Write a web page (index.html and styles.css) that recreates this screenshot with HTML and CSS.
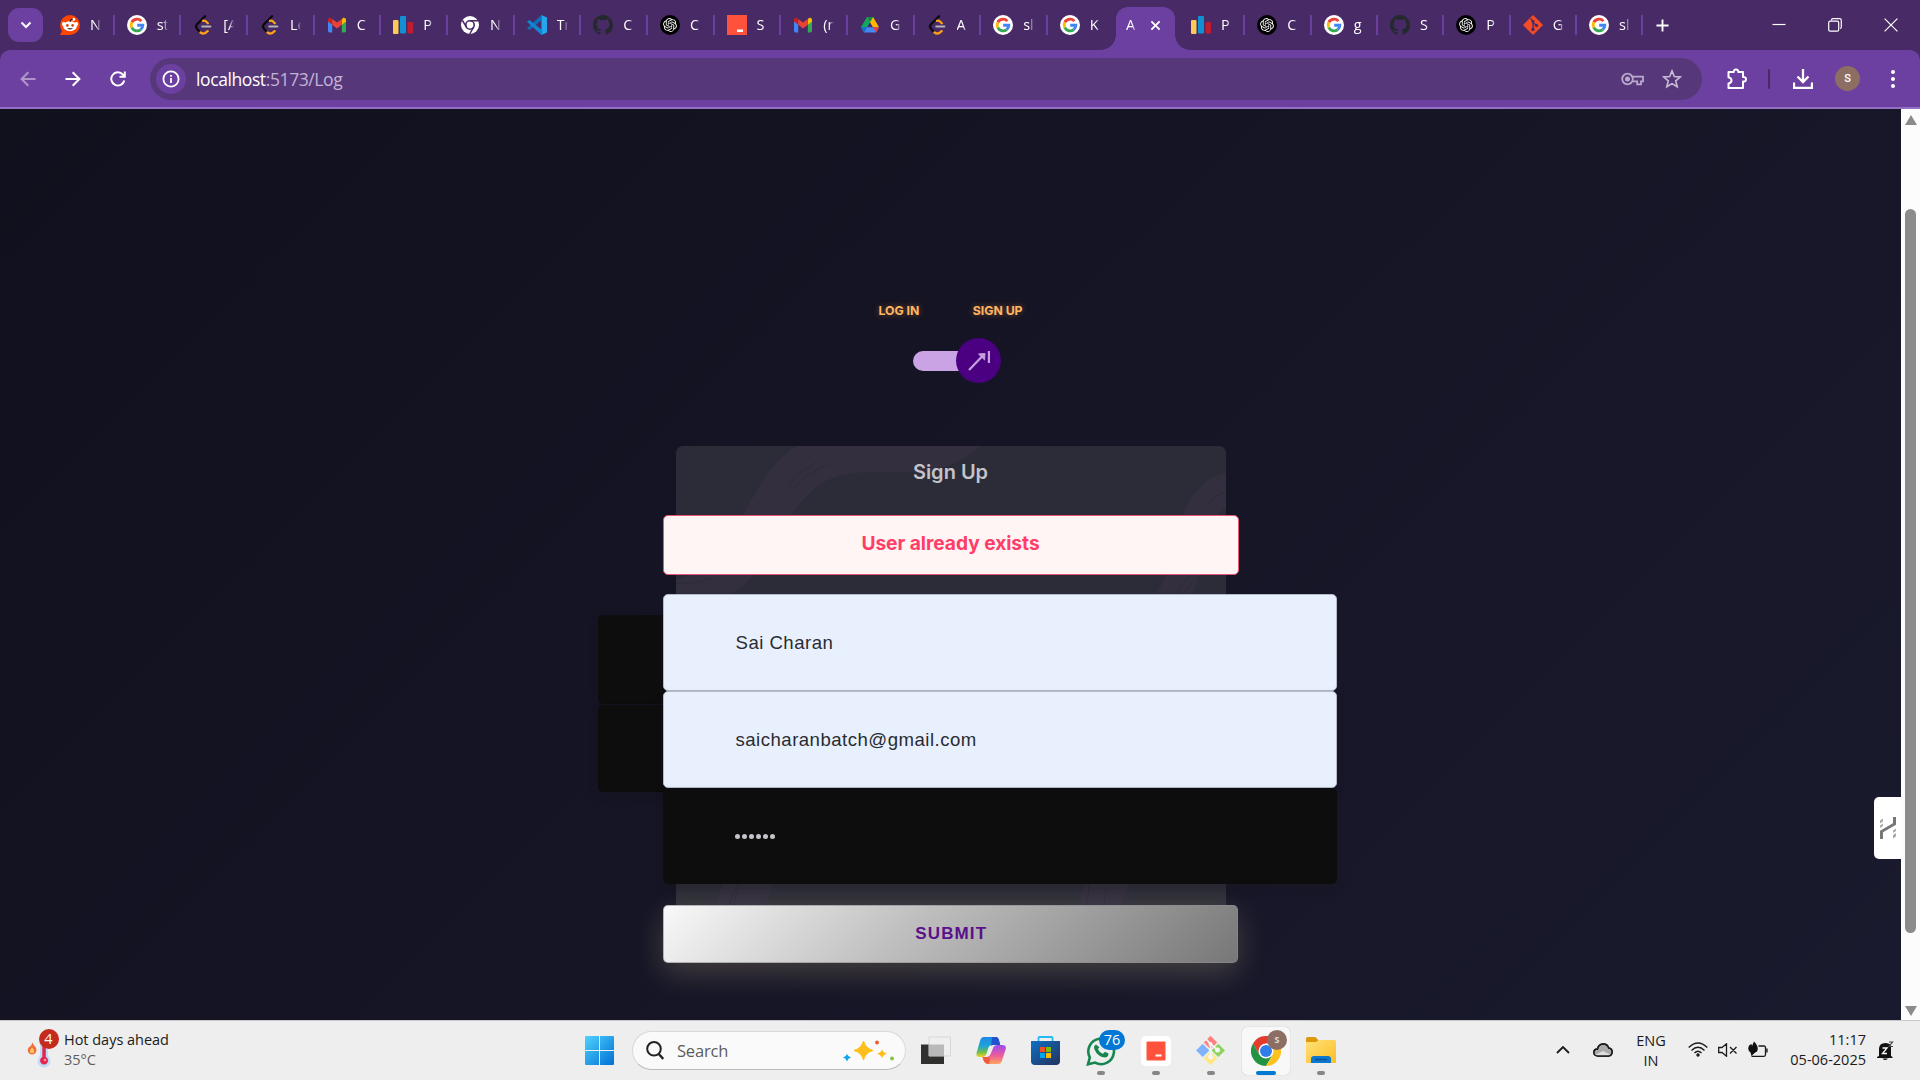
FILE: index.html
```html
<!DOCTYPE html>
<html lang="en">
<head>
<meta charset="utf-8">
<title>Log</title>
<link rel="stylesheet" href="styles.css">
</head>
<body>
<svg class="defs" aria-hidden="true">
  <defs>
    <linearGradient id="win" x1="0" y1="0" x2="1" y2="1"><stop offset="0" stop-color="#4fd2ff"/><stop offset="1" stop-color="#0070d3"/></linearGradient>
    <linearGradient id="copA" x1="0" y1="0" x2="0" y2="1"><stop offset="0" stop-color="#1e88e8"/><stop offset=".45" stop-color="#1fa3d8"/><stop offset=".75" stop-color="#6cbf4b"/><stop offset="1" stop-color="#f4d21f"/></linearGradient>
    <linearGradient id="copB" x1="0" y1="0" x2="0" y2="1"><stop offset="0" stop-color="#9a4df0"/><stop offset=".55" stop-color="#ec5c9c"/><stop offset="1" stop-color="#ffa65c"/></linearGradient>
    <linearGradient id="store" x1="0" y1="0" x2="1" y2="1"><stop offset="0" stop-color="#0d6fc4"/><stop offset="1" stop-color="#25335c"/></linearGradient>
    <linearGradient id="fold" x1="0" y1="0" x2="1" y2="1"><stop offset="0" stop-color="#ffe27a"/><stop offset="1" stop-color="#fcbe23"/></linearGradient>
    <symbol id="reddit" viewBox="0 0 20 20"><circle cx="10" cy="10" r="10" fill="#ff4500"/><path d="M0 20h10V10L3 14z" fill="#ff4500"/><circle cx="3.8" cy="9" r="2" fill="#fff"/><circle cx="16.2" cy="9" r="2" fill="#fff"/><ellipse cx="10" cy="11.3" rx="6.8" ry="5" fill="#fff"/><circle cx="13.6" cy="4.3" r="1.6" fill="#fff"/><path d="M10 7q0-3 3-3" stroke="#3a0d05" fill="none"/><circle cx="7.4" cy="10.4" r="1.3" fill="#d93a00"/><circle cx="12.6" cy="10.4" r="1.3" fill="#d93a00"/><path d="M7 13.2q3 2.6 6 0z" fill="#222"/></symbol>
    <symbol id="google" viewBox="0 0 20 20"><circle cx="10" cy="10" r="10" fill="#fff"/><g fill="none" stroke-width="2.9"><path d="M14.4 6.1A5.9 5.9 0 0 0 4.8 7.3" stroke="#ea4335"/><path d="M4.8 7.3a5.9 5.9 0 0 0 0 5.4" stroke="#fbbc05"/><path d="M4.8 12.7a5.9 5.9 0 0 0 8.9 1.9" stroke="#34a853"/><path d="M13.7 14.6a5.9 5.9 0 0 0 2.1-4.4H10.2" stroke="#4285f4"/></g></symbol>
    <symbol id="leet" viewBox="0 0 20 20"><g fill="none" stroke-linecap="round" stroke-width="2.3"><path d="M12 1.3L4 9.2q-2 2.2 0 4.6l2.400 2.700" stroke="#0b0b0b"/><path d="M10 5.800q2.200-.6 3.800 1.400l1 1M7.500 17.500q3.600 2.800 7.200-1.400" stroke="#ffa116"/><path d="M9.200 11.500h8.200" stroke="#b3b3b3" stroke-width="2"/></g></symbol>
    <symbol id="gmail" viewBox="0 0 20 20"><path d="M1 5v11a1.4 1.4 0 0 0 1.4 1.4h2.8V8z" fill="#4285f4"/><path d="M19 5v11a1.4 1.4 0 0 1-1.4 1.4h-2.8V8z" fill="#34a853"/><path d="M14.8 5v4.8L19 6.6V5c0-2-2.2-2.8-3.4-1.7z" fill="#fbbc04"/><path d="M1 5v1.6l4.2 3.2V5l-.8-1.7C3.200 2.200 1 3 1 5z" fill="#c5221f"/><path d="M5.2 9.800V4L10 7.600 14.800 4v5.800L10 13.400z" fill="#ea4335"/></symbol>
    <symbol id="bars" viewBox="0 0 20 20"><rect x="0" y="5" width="5.500" height="14" rx="1" fill="#fccb54"/><rect x="7" y="1" width="6" height="17.500" rx="1" fill="#1390d3"/><rect x="14.500" y="7" width="5.500" height="11.500" rx="1" fill="#bf1e2e"/></symbol>
    <symbol id="chromew" viewBox="0 0 20 20"><circle cx="10" cy="10" r="9" fill="#fff"/><circle cx="10" cy="10" r="4.200" fill="none" stroke="#472a66" stroke-width="1.600"/><path d="M10 5.800h8M6.400 12.100L2.500 5.500M13.600 12.100L9.700 19" stroke="#472a66" stroke-width="1.500"/></symbol>
    <symbol id="vscode" viewBox="0 0 20 20"><path d="M14.400 0L20 2.500v15L14.400 20z" fill="#24a5ee"/><path d="M14.400 0v5.600L2.400 15 0 13.300z" fill="#0d6fb5"/><path d="M14.400 20v-5.600L2.400 5 0 6.700z" fill="#1187d2"/></symbol>
    <symbol id="github" viewBox="0 0 16 16"><path fill="#24292e" d="M8 0C3.580 0 0 3.580 0 8c0 3.540 2.290 6.530 5.470 7.590.4.070.550-.170.550-.380 0-.190-.010-.820-.010-1.490-2.010.370-2.530-.490-2.690-.940-.090-.230-.480-.940-.820-1.130-.280-.150-.680-.520-.010-.530.630-.010 1.080.580 1.230.820.720 1.210 1.870.870 2.330.660.070-.520.280-.870.510-1.070-1.780-.200-3.640-.890-3.640-3.950 0-.870.310-1.590.820-2.150-.080-.200-.360-1.020.080-2.120 0 0 .670-.210 2.200.820a7.600 7.600 0 0 1 4 0c1.530-1.040 2.200-.820 2.200-.820.440 1.100.160 1.920.080 2.120.510.560.820 1.270.820 2.150 0 3.070-1.870 3.750-3.650 3.950.290.250.540.730.540 1.480 0 1.070-.010 1.930-.010 2.200 0 .210.150.460.550.380A8 8 0 0 0 16 8c0-4.420-3.580-8-8-8z"/></symbol>
    <symbol id="gpt" viewBox="0 0 40 40"><circle cx="20" cy="20" r="20" fill="#000"/><path transform="translate(6.200 6.200) scale(1.150)" fill="#fff" d="M22.2819 9.8211a5.9847 5.9847 0 0 0-.5157-4.9108 6.0462 6.0462 0 0 0-6.5098-2.9A6.0651 6.0651 0 0 0 4.9807 4.1818a5.9847 5.9847 0 0 0-3.9977 2.9 6.0462 6.0462 0 0 0 .7427 7.0966 5.98 5.98 0 0 0 .511 4.9107 6.051 6.051 0 0 0 6.5146 2.9001A5.9847 5.9847 0 0 0 13.2599 24a6.0557 6.0557 0 0 0 5.7718-4.2058 5.9894 5.9894 0 0 0 3.9977-2.9001 6.0557 6.0557 0 0 0-.7475-7.0729zm-9.022 12.6081a4.4755 4.4755 0 0 1-2.8764-1.0408l.1419-.0804 4.7783-2.7582a.7948.7948 0 0 0 .3927-.6813v-6.7369l2.02 1.1686a.071.071 0 0 1 .038.052v5.5826a4.504 4.504 0 0 1-4.4945 4.4944zm-9.6607-4.1254a4.4708 4.4708 0 0 1-.5346-3.0137l.142.0852 4.783 2.7582a.7712.7712 0 0 0 .7806 0l5.8428-3.3685v2.3324a.0804.0804 0 0 1-.0332.0615L9.74 19.9502a4.4992 4.4992 0 0 1-6.1408-1.6464zM2.3408 7.8956a4.485 4.485 0 0 1 2.3655-1.9728V11.6a.7664.7664 0 0 0 .3879.6765l5.8144 3.3543-2.0201 1.1685a.0757.0757 0 0 1-.071 0l-4.8303-2.7865A4.504 4.504 0 0 1 2.3408 7.872zm16.5963 3.8558L13.1038 8.364 15.1192 7.2a.0757.0757 0 0 1 .071 0l4.8303 2.7913a4.4944 4.4944 0 0 1-.6765 8.1042v-5.6772a.79.79 0 0 0-.407-.667zm2.0107-3.0231l-.142-.0852-4.7735-2.7818a.7759.7759 0 0 0-.7854 0L9.409 9.2297V6.8974a.0662.0662 0 0 1 .0284-.0615l4.8303-2.7866a4.4992 4.4992 0 0 1 6.6802 4.66zM8.3065 12.863l-2.02-1.1638a.0804.0804 0 0 1-.038-.0567V6.0742a4.4992 4.4992 0 0 1 7.3757-3.4537l-.142.0805L8.704 5.459a.7948.7948 0 0 0-.3927.6813zm1.0976-2.3654l2.602-1.4998 2.6069 1.4998v2.9994l-2.5974 1.4997-2.6067-1.4997Z"/></symbol>
    <symbol id="red" viewBox="0 0 20 20"><path d="M0 0h20v20H0z" fill="#ff523d"/><path d="M10 14.500h6V17h-6z" fill="#fff"/></symbol>
    <symbol id="drive" viewBox="0 0 20 20"><path d="M6.900 2L1 12.300 4 17.500 10 7.200z" fill="#11a861"/><path d="M6.900 2h6.200L19 12.300h-6z" fill="#ffba00"/><path d="M6.900 2h6.200L10 7.300z" fill="#0c8a45"/><path d="M4 17.500l3-5.200h12l-3 5.200z" fill="#4688f4"/><path d="M13 12.300h6l-3 5.200z" fill="#ea4335"/><path d="M1 12.300h6l-3 5.200z" fill="#1a68d8"/></symbol>
    <symbol id="git" viewBox="0 0 20 20"><path d="M10 .500L19.500 10 10 19.500.500 10z" fill="#f64d27" stroke="#f64d27" stroke-linejoin="round"/><path d="M7.500 3.500L10 6v9M10 7.500l3.500 3" stroke="#472a66" stroke-width="1.400" fill="none"/><g fill="#472a66"><circle cx="10" cy="6.500" r="1.500"/><circle cx="10" cy="14.500" r="1.700"/><circle cx="13.500" cy="10.500" r="1.700"/></g></symbol>
  </defs>
</svg>

<header class="tabstrip">
  <button class="tab-search"><svg viewBox="0 0 12 8" width="12" height="8"><path d="M1.500 1.500L6 6l4.500-4.500" fill="none" stroke="#fff" stroke-width="2"/></svg></button>
  <div class="tabs">
    <div class="tab"><svg><use href="#reddit"/></svg><span>N</span></div>
    <div class="tab"><svg><use href="#google"/></svg><span>st</span></div>
    <div class="tab"><svg><use href="#leet"/></svg><span>[A</span></div>
    <div class="tab"><svg><use href="#leet"/></svg><span>Le</span></div>
    <div class="tab"><svg><use href="#gmail"/></svg><span>C</span></div>
    <div class="tab"><svg><use href="#bars"/></svg><span>P</span></div>
    <div class="tab"><svg><use href="#chromew"/></svg><span>N</span></div>
    <div class="tab"><svg><use href="#vscode"/></svg><span>Tr</span></div>
    <div class="tab"><svg><use href="#github"/></svg><span>C</span></div>
    <div class="tab"><svg><use href="#gpt"/></svg><span>C</span></div>
    <div class="tab"><svg><use href="#red"/></svg><span>S</span></div>
    <div class="tab"><svg><use href="#gmail"/></svg><span>(n</span></div>
    <div class="tab"><svg><use href="#drive"/></svg><span>G</span></div>
    <div class="tab"><svg><use href="#leet"/></svg><span>A</span></div>
    <div class="tab"><svg><use href="#google"/></svg><span>sl</span></div>
    <div class="tab last"><svg><use href="#google"/></svg><span>K</span></div>
    <div class="tab active"><span>A</span><svg class="close" viewBox="0 0 12 12"><path d="M1.500 1.500l9 9m0-9l-9 9" stroke="#fff" stroke-width="2"/></svg></div>
    <div class="tab"><svg><use href="#bars"/></svg><span>P</span></div>
    <div class="tab"><svg><use href="#gpt"/></svg><span>C</span></div>
    <div class="tab"><svg><use href="#google"/></svg><span>g</span></div>
    <div class="tab"><svg><use href="#github"/></svg><span>S</span></div>
    <div class="tab"><svg><use href="#gpt"/></svg><span>P</span></div>
    <div class="tab"><svg><use href="#git"/></svg><span>G</span></div>
    <div class="tab"><svg><use href="#google"/></svg><span>sl</span></div>
  </div>
  <svg class="plus" viewBox="0 0 14 14"><path d="M7 .500v13M.500 7h13" stroke="#fff" stroke-width="2"/></svg>
  <div class="window-controls">
    <svg viewBox="0 0 14 14"><path d="M.500 6.500h13" stroke="#fff" stroke-width="1.200"/></svg>
    <svg viewBox="0 0 14 14"><path d="M3.500 2.500V2Q3.500.700 5 .700h6.500q1.800 0 1.800 1.800V9q0 1.500-1.300 1.500" fill="none" stroke="#fff" stroke-width="1.200"/><rect x=".700" y="3.200" width="10" height="10" rx="1.500" fill="none" stroke="#fff" stroke-width="1.200"/></svg>
    <svg viewBox="0 0 14 14"><path d="M.600.600l12.800 12.800M13.400.600L.600 13.400" stroke="#fff" stroke-width="1.200"/></svg>
  </div>
</header>

<nav class="toolbar">
  <div class="nav-buttons">
    <svg class="dim" viewBox="0 0 16 16"><path d="M15.500 8H1.800M8.300 1.300L1.600 8l6.700 6.700"/></svg>
    <svg viewBox="0 0 16 16"><path d="M.500 8h13.700M7.700 1.300L14.400 8l-6.700 6.700"/></svg>
    <svg viewBox="0 0 16 16"><path d="M14.300 9.500A6.600 6.600 0 1 1 12.800 3.500L14.300 5M14.800.500v5.300H9.500"/></svg>
  </div>
  <div class="omnibox">
    <div class="site-info"><svg viewBox="0 0 18 18"><circle cx="9" cy="9" r="7.600"/><path d="M9 8v5M9 5v1.700"/></svg></div>
    <div class="url">localhost<span>:5173/Log</span></div>
    <svg class="key" viewBox="0 0 23 14"><circle cx="6.500" cy="7" r="5.300"/><circle cx="6.500" cy="7" r="1.600" fill="#b9a9cc"/><path d="M11.500 4.600h10.500v4.800h-2v3h-3.800v-3h-4.700"/></svg>
    <svg class="star" viewBox="0 0 20 20"><path d="M10 1.900l2.300 5.600 6 .5-4.600 3.900 1.500 5.900-5.200-3.200-5.200 3.200 1.500-5.900L1.700 8l6-.5z"/></svg>
  </div>
  <svg class="ext" viewBox="0 0 22 22"><path d="M2.500 4h5.300q-.2-2.500 2.200-2.500T12.200 4H17v5q3-.2 3 2.300T17 13.600V20H2.500v-4.500q3-.6 3-3T2.500 9.300z" fill="none" stroke="#fff" stroke-width="2" stroke-linejoin="round"/></svg>
  <i class="divider"></i>
  <svg class="download" viewBox="0 0 20 20"><path d="M10 0v12M4.500 7.500L10 13l5.500-5.500M1 13.500V19h18v-5.500" fill="none" stroke="#fff" stroke-width="2.300"/></svg>
  <div class="avatar">S</div>
  <svg class="dots" viewBox="0 0 4 18"><circle cx="2" cy="2" r="2"/><circle cx="2" cy="9" r="2"/><circle cx="2" cy="16" r="2"/></svg>
</nav>

<div class="viewport">
  <main class="page">
    <div class="mode-labels"><span>LOG IN</span><span class="signup">SIGN UP</span></div>
    <div class="toggle"><div class="track"></div><div class="knob"><svg viewBox="0 0 22 20"><path d="M1 19L15 4.500" stroke-width="2.200"/><path d="M10.500 3l6.500-.5-.4 6.500z" fill="#c5a0e0" stroke-width="1"/><path d="M21 0v12" stroke-width="2.400"/></svg></div></div>
    <section class="form-area">
      <div class="ghost ghost-top"></div>
      <div class="ghost ghost-bottom"></div>
      <div class="card">
        <svg class="pattern" viewBox="0 0 550 480" width="550" height="480">
          <g fill="#332f3e">
            <path d="M121 0C96 14 83 41 67 69C50 100 25 128 0 134V147H56C86 130 97 98 117 67C141 34 158 26 200 26H231C266 26 286 16 304 0z"/>
            <path d="M550 27C529 31 516 47 507 69C498 93 495 125 481 147H517C527 125 524 94 541 69L550 60z"/>
            <path d="M51 426L39 459H89C95 447 97 438 100 426zM411 426L403 459H446L456 426z"/>
          </g>
          <path d="M112 41Q123 25 141 16M115 46Q127 28 152 19M0 137Q18 139 35 132M534 56Q540 49 550 46M513 129L501 147M524 128L507 147M61 437L53 459M66 430L57 459M413 437L411 459M432 429L428 459" fill="none" stroke="#2b2c38"/>
        </svg>
        <h4>Sign Up</h4>
        <div class="alert">User already exists</div>
        <div class="field filled">Sai Charan</div>
        <div class="field filled second">saicharanbatch@gmail.com</div>
        <div class="field dark"><i></i><i></i><i></i><i></i><i></i><i></i></div>
        <button class="submit">SUBMIT</button>
      </div>
    </section>
    <div class="side-widget"><svg viewBox="0 0 16 22" width="16" height="22"><path d="M1.500 22v-7.500L14.500 7V0" fill="none" stroke="#777" stroke-width="3"/><path d="M0 3.500l3-2v3l-3 2zM0 8.500l3-2v2.500l-3 2zM13 13.500l3-2v2.500l-3 2zM13 18l3-2v3.500l-3 2z" fill="#aaa"/></svg></div>
  </main>
  <div class="scrollbar"><i class="up"></i><i class="thumb"></i><i class="down"></i></div>
</div>

<footer class="taskbar">
  <div class="weather">
    <div class="weather-icon">
      <svg viewBox="0 0 34 38" width="34" height="38"><path d="M5.500 10.500q1 3 3 4.500 1.500 2 .8 4.500-1.300 3-4.300 3T.800 19Q.500 15.500 3 14.500q2-1.500 2.500-4z" fill="#f0703a"/><path d="M5 15.500q3 2.500 1.500 5.500H3.500Q2 18.500 5 15.500z" fill="#ffc36b"/><path d="M13 12h8v12a6.500 6.500 0 1 1-8 0z" fill="#c2dcf5"/><path d="M15.300 12h3.500v13a4 4 0 1 1-3.500 0z" fill="#e42653"/><circle cx="18" cy="28" r="1.200" fill="#ff9cae"/></svg>
      <b>4</b>
    </div>
    <div class="weather-text"><div>Hot days ahead</div><div class="temp">35°C</div></div>
  </div>
  <div class="apps">
    <div class="app start"><svg width="29" height="29" viewBox="0 0 29 29"><path d="M1 0h13v14H0V1q0-1 1-1zM15 0h13q1 0 1 1v13H15zM0 15h14v14H1q-1 0-1-1zM15 15h14v13q0 1-1 1H15z" fill="url(#win)"/></svg></div>
    <div class="search">
      <svg class="lens" viewBox="0 0 18 19"><circle cx="8" cy="7.800" r="6.800" fill="none" stroke="#222" stroke-width="2"/><path d="M12.800 13l4.500 5" stroke="#222" stroke-width="2.500"/></svg>
      <span>Search</span>
      <svg class="sparkles" viewBox="0 0 52 22"><path d="M20.500 1q1.800 7.200 9.500 9.500-7.700 2-9.500 9.500-1.800-7.500-9.500-9.500 7.700-2.300 9.500-9.500z" fill="#fdbf1c" stroke="#fdbf1c"/><path d="M39 9q.900 3.600 5 4.700-4.100 1-5 4.800-.900-3.800-5-4.800 4.100-1.100 5-4.700z" fill="#fdbf1c"/><path d="M4 14q1 2.700 4 3.500-3 .700-4 4-1-3.300-4-4 3-.800 4-3.500z" fill="#10a5ee"/><circle cx="34" cy="2.500" r="1.900" fill="#ef5b30"/><circle cx="49" cy="18.500" r="1.900" fill="#82c341"/></svg>
    </div>
    <div class="app tv"><svg width="30" height="29" viewBox="0 0 30 29"><path d="M0 8.500h23V28H0z" fill="#30302f"/><path d="M8 1h21.500v19H8z" fill="#efefef" stroke="#d6d6d6"/><path d="M8 8.500h15V20H8z" fill="#b9b9b9"/></svg></div>
    <div class="app"><svg width="30" height="28" viewBox="0 0 30 28"><path d="M8 0h11q3.500 0 4 4l1 4H16q-3 0-4 4l-2 6q-1 2-4 2H3q-3 0-2.500-4L4 4q1-4 4-4z" fill="url(#copA)"/><path d="M16 0h4q2.500 0 3.300 4l1 4H17q-2 0-2 2z" fill="#2252ce"/><path d="M22 27H12q-3.500 0-4.500-4l-1-3h4q3 0 4.500-4l2.500-6q1-2 4-2h5q4 0 3.300 4l-3.600 11q-1 4-4.200 4z" fill="url(#copB)"/><path d="M13 27q-4 0-5.500-4l-1-3h7q1 4-.5 7z" fill="#ee5a3d"/></svg></div>
    <div class="app"><svg width="29" height="29" viewBox="0 0 29 29"><path d="M7.500 6V2q0-1 1-1h12q1 0 1 1v4" fill="none" stroke="#28b9f2" stroke-width="1.800"/><path d="M0 5h29v20q0 4-4 4H4q-4 0-4-4z" fill="url(#store)"/><path d="M9 11h5v5H9z" fill="#f25022"/><path d="M15 11h5v5h-5z" fill="#7fba00"/><path d="M9 17h5v5H9z" fill="#00a4ef"/><path d="M15 17h5v5h-5z" fill="#ffb900"/></svg></div>
    <div class="app running"><svg width="30" height="30" viewBox="0 0 30 30"><path d="M2 28.300l1.800-7A12.800 12.800 0 1 1 9 26.600z" fill="none" stroke="#168650" stroke-width="2.600"/><path d="M10 8.500q-3 1.500-1.500 5 3 7 10 8 4 0 4-4l-3.500-1.800-2 2q-4-1.500-5-5l1.500-1.500z" fill="#168650"/></svg><b class="count">76</b></div>
    <div class="app running"><svg width="30" height="30" viewBox="0 0 30 30"><rect width="30" height="30" rx="5" fill="#fff"/><rect x="5.500" y="5.500" width="19" height="19" rx="1" fill="#ff523d"/><path d="M14.500 18.500h6v2h-6z" fill="#fff"/></svg></div>
    <div class="app running"><svg width="31" height="31" viewBox="0 0 31 31"><g stroke-width="1" stroke-linejoin="round"><path d="M15.500.800l6.700 6.700-6.700 6.700-6.700-6.700z" fill="#ff8080"/><path d="M7.700 8.700l6.700 6.700-6.700 6.700L1 15.400z" fill="#80b3ff"/><path d="M23.300 8.700l6.700 6.700-6.700 6.700-6.700-6.700z" fill="#8dd35f"/><path d="M15.500 16.500l6.700 6.700-6.700 6.700-6.700-6.700z" fill="#ffe680"/></g><path d="M11 4l4.500 5v12M15.500 9l7 6" fill="none" stroke="#f5f5f5" stroke-width="1.800"/><circle cx="15.500" cy="22" r="2.500" fill="#f5f5f5"/><circle cx="22.500" cy="15" r="2.500" fill="#f5f5f5"/><circle cx="15.500" cy="9" r="2" fill="#f5f5f5"/></svg></div>
    <div class="app current"><svg width="30" height="30" viewBox="0 0 30 30"><path d="M2 7.500A15 15 0 0 1 28 7.500H15L8.500 18.700z" fill="#e33b2e"/><path d="M2 7.500A15 15 0 0 0 15 30l6.500-11.200H8.500z" fill="#229342"/><path d="M28 7.500A15 15 0 0 1 15 30l6.500-11.200L15 7.500z" fill="#fcc31e"/><circle cx="15" cy="15" r="7.500" fill="#fff"/><circle cx="15" cy="15" r="6" fill="#2f7de9"/></svg><b class="profile">S</b></div>
    <div class="app running"><svg width="30" height="27" viewBox="0 0 30 27"><path d="M0 5V1.500Q0 0 1.500 0h7q1 0 2 1l2.500 3v4H0z" fill="#dc9a08"/><path d="M0 5h10l3-2h15.500Q30 3 30 4.500V26H0z" fill="url(#fold)"/><path d="M5 26v-4q0-3 3-3h14q3 0 3 3v4z" fill="#0e78cf"/><path d="M9 22.500h12" stroke="#0a4f98" stroke-width="1.400"/></svg></div>
  </div>
  <div class="tray">
    <svg class="chev" viewBox="0 0 14 8"><path d="M1 7l6-6 6 6"/></svg>
    <svg class="cloud" viewBox="0 0 20 14"><path d="M5 13Q.800 13 .800 9.500T4.500 6q1-5 6-5 4 0 5.200 4 3.500.500 3.500 4t-3.700 4z" fill="#a9a9a9"/><path d="M2 12l8-4 8 4-2.500 1H5z" fill="#dedede" stroke="none"/><path d="M5 13Q.800 13 .800 9.500T4.500 6q1-5 6-5 4 0 5.200 4 3.500.500 3.500 4t-3.700 4z"/></svg>
    <div class="lang"><div>ENG</div><div>IN</div></div>
    <svg class="wifi" viewBox="0 0 20 15"><path d="M.700 5.500Q10-3.500 19.300 5.500M3.500 8.500q6.500-6.500 13 0M6.500 11q3.500-3.500 7 0"/><circle cx="10" cy="13" r="1.700" fill="#1a1a1a" stroke="none"/></svg>
    <svg class="speaker" viewBox="0 0 20 14"><path d="M.700 4.500v5H4l4.500 3.700V.800L4 4.500zM12 4l6.500 6.500m0-6.500L12 10.500"/></svg>
    <svg class="battery" viewBox="0 0 20 17"><path d="M3 15.300h12.500q1.500 0 1.500-1.500V6.500Q17 5 15.500 5H10M18.500 7.500v4" /><path d="M5.500.500Q11 6 8.500 10.500L6 12 3 15 2 11.500Q-2 8.500 1 4l2-1 .500 2z" fill="#111" stroke="none"/></svg>
    <div class="clock"><div>11:17</div><div>05-06-2025</div></div>
    <div class="bell"><svg viewBox="0 0 17 20" width="17" height="20"><path d="M2 15V8q0-6 6.500-6T14 8v7l1.500 1v1H0v-1z" fill="#111"/><path d="M5.500 17.500q2.500 3 5.500 0z" fill="#111"/><path d="M5.500 7h4.500l-4.500 5.500H10" fill="none" stroke="#fff" stroke-width="1.300"/><path d="M12 1h3.500L12 5.500h4" fill="none" stroke="#444" stroke-width="1.200"/></svg></div>
  </div>
</footer>
</body>
</html>
```
FILE: styles.css
```css
* { box-sizing: border-box; }
body {
  margin: 0;
  width: 1920px;
  height: 1080px;
  overflow: hidden;
  display: flex;
  flex-direction: column;
  font-family: "Open Sans", "Noto Sans", sans-serif;
  background: #472a66;
}
button { border: 0; padding: 0; }
svg { display: block; flex: none; }
.defs { position: absolute; width: 0; height: 0; }

/* Tab strip */
.tabstrip { height: 50px; display: flex; align-items: center; flex: none; }
.tab-search {
  width: 35px; height: 34px; margin-left: 8px; border-radius: 11px;
  background: #6c40a0; display: flex; align-items: center; justify-content: center;
}
.tabs { display: flex; margin-left: 5px; height: 50px; align-items: center; }
.tab {
  width: 66.670px; height: 20px; padding-left: 12px; display: flex; align-items: center;
  gap: 10px; border-right: 2px solid #6c40a0; color: #fff; font-size: 14.500px;
}
.tab.active ~ .tab { width: 66.330px; }
.tab svg { width: 20px; height: 20px; }
.tab span {
  width: 11px; overflow: hidden; white-space: nowrap; line-height: 20px;
  mask-image: linear-gradient(90deg, #000 55%, transparent);
}
.tab.last { border-color: transparent; }
.tab.active {
  position: relative; height: 43px; align-self: flex-end; width: 59px; margin: 0 4px 0 1.500px;
  border: 0; border-radius: 12px 12px 0 0; background: #6c40a0; padding: 0 0 7px 10px; gap: 13px;
}
.tab.active::before, .tab.active::after {
  content: ""; position: absolute; bottom: 0; width: 15px; height: 15px;
}
.tab.active::before { left: -15px; background: radial-gradient(circle at 0 0, transparent 14.500px, #6c40a0 15px); }
.tab.active::after { right: -15px; background: radial-gradient(circle at 100% 0, transparent 14.500px, #6c40a0 15px); }
.tab svg.close { width: 11px; height: 11px; }
.plus { width: 13px; height: 13px; margin-left: 13px; }
.window-controls { margin-left: auto; margin-right: 22px; display: flex; gap: 42px; }
.window-controls svg { width: 14px; height: 14px; }

/* Toolbar */
.toolbar {
  height: 59px; flex: none; background: #6c40a0; border-bottom: 2px solid #9470c4;
  border-radius: 10px 10px 0 0; display: flex; align-items: center; padding-left: 19.500px;
}
.nav-buttons { display: flex; gap: 29px; width: 130.500px; }
.nav-buttons svg { width: 16px; height: 16px; fill: none; stroke: #fff; stroke-width: 2; }
.nav-buttons .dim { opacity: 0.450; }
.omnibox {
  width: 1552px; height: 42px; border-radius: 21px; background: #56387a;
  display: flex; align-items: center; padding: 0 20px 0 6px;
}
.site-info { width: 30px; height: 30px; border-radius: 50%; background: #6c40a0; display: grid; place-items: center; }
.site-info svg { width: 18px; height: 18px; fill: none; stroke: #fff; stroke-width: 1.800; }
.url { margin-left: 10px; font-size: 17.500px; letter-spacing: -0.400px; color: #fff; flex: 1; }
.url span { color: #c3b3d6; }
.key { width: 23px; height: 14px; fill: none; stroke: #b9a9cc; stroke-width: 1.800; margin-right: 18px; }
.star { width: 20px; height: 20px; fill: none; stroke: #c9bcd8; stroke-width: 1.600; }
.ext { width: 22px; height: 22px; margin-left: 24px; }
.divider { width: 2px; height: 20px; background: #472a66; margin-left: 20px; border-radius: 1px; }
.download { width: 20px; height: 20px; margin-left: 23px; }
.avatar {
  width: 25px; height: 25px; border-radius: 50%; background: #8d6e63; margin-left: 22px;
  color: #fff; font: 500 11px/25px Roboto, sans-serif; text-align: center;
}
.dots { width: 4px; height: 18px; fill: #fff; margin-left: 30.500px; }

/* Page */
.viewport { height: 911px; flex: none; display: flex; }
.page {
  position: relative; width: 1901px; overflow: hidden;
  display: flex; flex-direction: column; align-items: center;
  background: linear-gradient(135deg, #11101d 0%, #1a1a2e 100%);
  font-family: Inter, "Open Sans", sans-serif;
}
.mode-labels {
  margin-top: 193px; display: flex; width: 144px; justify-content: space-between;
  font-size: 12.300px; line-height: 18px; font-weight: 700; color: #ffb562; letter-spacing: -0.050px;
  text-shadow: 0 0 6px rgba(255, 160, 70, 0.450); white-space: nowrap;
}
.toggle { display: flex; align-items: center; margin-top: 18px; height: 45px; margin-left: 13px; }
.track { width: 55px; height: 20px; border-radius: 10px 0 0 10px; background: #c9a3e4; }
.knob {
  width: 45px; height: 45px; border-radius: 50%; background: #4b0082; margin-left: -12px;
  display: grid; place-items: center;
}
.knob svg { width: 22px; height: 20px; fill: none; stroke: #c5a0e0; }
.form-area { position: relative; width: 550px; margin-top: 63px; }
.card {
  position: relative; width: 550px; display: flex; flex-direction: column; align-items: flex-start;
  background: linear-gradient(#2b2c38 90%, #32323b); border-radius: 7px; height: 480px;
}
.card > * { position: relative; }
.card > .pattern { position: absolute; inset: 0; }
.card h4 {
  margin: 11px 0 0; width: 550px; text-align: center; font-size: 20px; line-height: 30px;
  font-weight: 600; color: #c4c3ca;
}
.alert {
  margin: 28px 0 0 -13px; width: 576px; height: 60px; flex: none; border: 1.500px solid #e75475; border-radius: 5px;
  background: #fff5f4; color: #ff3d68; font-size: 19.200px; font-weight: 700; line-height: 54px;
  letter-spacing: -0.050px; text-align: center;
}
.field {
  width: 674px; height: 97px; flex: none; margin-left: -13px; padding-left: 72px; border-radius: 5px;
  display: flex; align-items: center;
  font-family: "Liberation Sans", sans-serif; font-size: 18.600px; letter-spacing: 0.480px; color: #2a2b31;
}
.field.filled { background: #e8f0fe; border: 1px solid #b3bac9; margin-top: 19px; }
.field.filled.second { margin-top: 0; box-shadow: 0 5px 10px rgba(21, 21, 21, 0.200); }
.field.dark { height: 96px; background: #0d0d0e; gap: 2.200px; box-shadow: 0 5px 10px rgba(21, 21, 21, 0.200); }
.field.dark i { width: 5px; height: 5px; border-radius: 50%; background: #c4c3ca; }
.submit {
  margin: 21px 0 0 -13px; width: 575.500px; height: 58px; flex: none; border-radius: 5px;
  border: 1px solid rgba(140, 140, 145, 0.600); padding-left: 2px;
  background: linear-gradient(135deg, #f9f9f9 0%, #bfbfbf 42%, #777 100%) border-box;
  box-shadow: 0 10px 30px rgba(255, 235, 167, 0.200);
  font: 700 17px "Liberation Sans", sans-serif; letter-spacing: 1.150px; color: #5a0f8c;
}
.ghost {
  position: absolute; left: -78px; width: 400px; border-radius: 5px; background: #0d0d0e;
  box-shadow: 0 5px 10px rgba(21, 21, 21, 0.200);
}
.ghost-top { top: 169px; height: 89px; }
.ghost-bottom { top: 259px; height: 87px; }
.side-widget {
  position: absolute; right: 0; top: 688px; width: 27px; height: 62px;
  border-radius: 5px 0 0 5px; background: #fff; display: grid; place-items: center;
}
.scrollbar { width: 19px; background: #fcfcfc; display: flex; flex-direction: column; align-items: center; padding: 6px 0 4px; }
.up, .down { width: 0; border: 6.500px solid transparent; }
.up { border-top: 0; border-bottom: 10px solid #8b8b8b; }
.down { border-bottom: 0; border-top: 10px solid #8b8b8b; margin-top: auto; }
.thumb { width: 11px; height: 724px; margin-top: 84px; border-radius: 6px; background: #8b8b8b; }

/* Taskbar */
.taskbar {
  position: relative; height: 60px; flex: none; background: #eee; border-top: 1px solid #c8c8c8;
  display: flex; color: #1a1a1a; font-size: 14.500px; line-height: 20px;
}
.weather { display: flex; align-items: center; padding-left: 26.500px; width: 570px; }
.weather-icon { position: relative; width: 37.500px; }
.weather-icon b {
  position: absolute; left: 12px; top: -3px; width: 20px; height: 20px; border-radius: 50%;
  background: #c42b1c; color: #fff; text-align: center; font-weight: 400;
}
.weather-text { letter-spacing: -0.020px; margin-top: -1px; }
.temp { color: #5c5c5c; }
.apps { display: flex; align-items: center; }
.app { position: relative; width: 55px; height: 48px; display: grid; place-items: center; }
.app.start { padding-left: 4px; }
.app.tv { margin-left: 2px; }
.search {
  width: 274px; height: 39px; border-radius: 20px; background: #fafafa; border: 1px solid #d9d9d9;
  border-bottom-color: #bbb; margin-left: 7px; display: flex; align-items: center; padding: 0 10px 0 13px;
}
.lens { width: 18px; height: 19px; }
.search span { margin-left: 13px; font-size: 16.500px; color: #5d5d5d; flex: 1; letter-spacing: -0.200px; }
.sparkles { width: 52px; height: 22px; }
.running::after, .current::after {
  content: ""; position: absolute; left: 23.500px; bottom: 0; width: 8px; height: 4px; border-radius: 2px; background: #868686;
}
.current { width: 48px; margin: 0 3px 0 4px; border-radius: 5px; background: #f8f8f8; box-shadow: 0 0 1px #aaa; }
.current::after { left: 14px; width: 20px; background: #0078d4; }
.count {
  position: absolute; left: 26px; top: 3px; width: 26px; height: 20px; border-radius: 10px;
  background: #0078d4; color: #fff; font-weight: 400; text-align: center;
}
.profile {
  position: absolute; right: 3px; top: 3px; width: 20px; height: 20px; border-radius: 50%;
  background: #8d6e63; color: #ddd; font-size: 9px; text-align: center;
}
.tray { margin-left: auto; display: flex; align-items: center; }
.tray > svg { fill: none; stroke: #1a1a1a; stroke-width: 1.300; position: relative; top: -1px; }
.chev { width: 14px; height: 8px; margin-right: 23px; }
.chev path { stroke-width: 1.800; }
.cloud { width: 20px; height: 14px; }
.lang { width: 40px; text-align: center; margin: 0 17px 0 18px; }
.wifi { width: 20px; height: 15px; margin-right: 10px; }
.speaker { width: 20px; height: 14px; margin-right: 10px; }
.battery { width: 21px; height: 17px; }
.clock { width: 97px; text-align: right; letter-spacing: 0; margin-top: -2px; }
.bell { margin: 0 26px 0 11px; }
```
